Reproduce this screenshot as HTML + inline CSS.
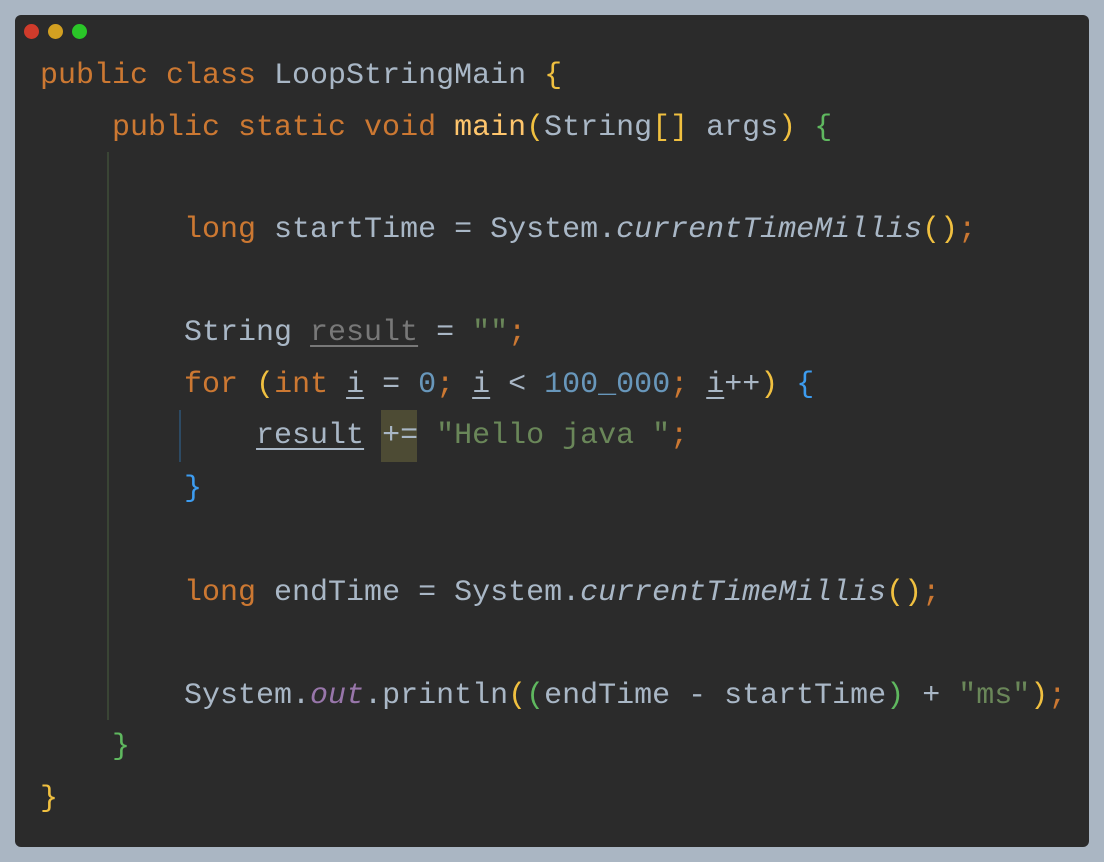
<!DOCTYPE html>
<html><head><style>
body{margin:0;width:1104px;height:862px;background:#aab6c3;position:relative;overflow:hidden}
.win{position:absolute;left:15px;top:15px;width:1074px;height:832px;background:#2b2b2b;border-radius:6px}
.dot{position:absolute;top:24px;width:15px;height:15px;border-radius:50%}
.l{position:absolute;left:40px;height:52px;line-height:52px;font-family:"Liberation Mono",monospace;font-size:30px;color:#a9b7c6;white-space:pre;margin-top:2px}
.k{color:#cc7832}.y{color:#f0c040}.f{color:#ffc66d}.g{color:#5fb85f}.n{color:#6897bb}.s{color:#6a8759}.b{color:#3d9cf0}.p{color:#9876aa;font-style:italic}.i{font-style:italic}
.u{text-decoration:underline;text-underline-offset:5px;text-decoration-thickness:2px}
.gr{color:#787878}
.hl{position:absolute;left:381px;top:410px;width:36px;height:52px;background:#4d4b34}
.vl{position:absolute;width:2px}
</style></head><body>
<div class="win"></div>
<div class="dot" style="left:24px;background:#d03b2b"></div>
<div class="dot" style="left:48px;background:#d3a021"></div>
<div class="dot" style="left:72px;background:#2ac628"></div>
<div class="vl" style="left:107px;top:152px;height:568px;background:#3a4535"></div>
<div class="vl" style="left:179px;top:410px;height:52px;background:#2d4a63"></div>
<div class="hl"></div>
<div class="l" style="top:48px"><span class="k">public class </span>LoopStringMain <span class="y">{</span></div>
<div class="l" style="top:100px">    <span class="k">public static void </span><span class="f">main</span><span class="y">(</span>String<span class="y">[]</span> args<span class="y">)</span> <span class="g">{</span></div>
<div class="l" style="top:202px">        <span class="k">long </span>startTime = System.<span class="i">currentTimeMillis</span><span class="y">()</span><span class="k">;</span></div>
<div class="l" style="top:305px">        String <span class="gr u">result</span> = <span class="s">""</span><span class="k">;</span></div>
<div class="l" style="top:357px">        <span class="k">for </span><span class="y">(</span><span class="k">int </span><span class="u">i</span> = <span class="n">0</span><span class="k">; </span><span class="u">i</span> &lt; <span class="n">100_000</span><span class="k">; </span><span class="u">i</span>++<span class="y">)</span> <span class="b">{</span></div>
<div class="l" style="top:408px">            <span class="u">result</span> += <span class="s">"Hello java "</span><span class="k">;</span></div>
<div class="l" style="top:461px">        <span class="b">}</span></div>
<div class="l" style="top:565px">        <span class="k">long </span>endTime = System.<span class="i">currentTimeMillis</span><span class="y">()</span><span class="k">;</span></div>
<div class="l" style="top:668px">        System.<span class="p">out</span>.println<span class="y">(</span><span class="g">(</span>endTime - startTime<span class="g">)</span> + <span class="s">"ms"</span><span class="y">)</span><span class="k">;</span></div>
<div class="l" style="top:719px">    <span class="g">}</span></div>
<div class="l" style="top:771px"><span class="y">}</span></div>
</body></html>
